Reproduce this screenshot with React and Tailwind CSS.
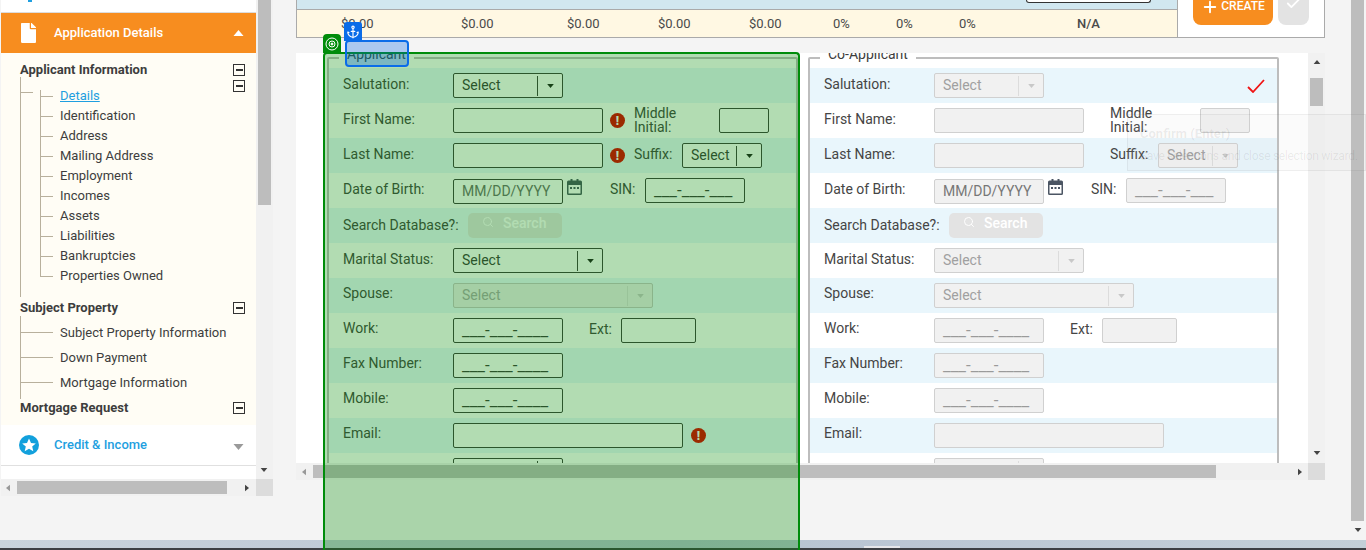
import { Anchor, Check, Plus, Search } from "lucide-react";
import { FaFile } from "react-icons/fa";

const LINE = "bg-[#b8b09c]";

function Caret({ dir = "down", className = "" }) {
  const points = {
    down: "0,0 10,0 5,6",
    up: "0,6 10,6 5,0",
    left: "6,0 6,10 0,5",
    right: "0,0 6,5 0,10",
  }[dir];
  const box = dir === "down" || dir === "up" ? "0 0 10 6" : "0 0 6 10";
  return (
    <svg viewBox={box} className={className} fill="currentColor">
      <polygon points={points} />
    </svg>
  );
}

function Minus() {
  return (
    <span className="flex h-3 w-3 items-center justify-center border border-[#333] bg-[#fffdf5]">
      <span className="h-0.5 w-[7px] bg-[#333]" />
    </span>
  );
}

function TreeItem({ label, active }) {
  return (
    <li className="flex h-5 items-center">
      <span className={`h-px w-[13px] ${LINE}`} />
      <span className={`ml-[7px] ${active ? "text-[#1f9fe0] underline" : ""}`}>{label}</span>
    </li>
  );
}

function Sidebar() {
  const details = ["Identification", "Address", "Mailing Address", "Employment", "Incomes", "Assets", "Liabilities", "Bankruptcies", "Properties Owned"];
  return (
    <div className="ml-px flex w-[272px] shrink-0 flex-col">
      <div className="flex h-[479px]">
        <div className="flex w-[255px] flex-col bg-white">
          <div className="h-[13px] shrink-0 border-b border-[#dcdcdc]">
            <div className="ml-[27px] h-[2px] w-1 bg-[#1f9fe0]" />
          </div>
          <div className="flex h-[40px] shrink-0 items-center bg-[#f78d1f] text-white">
            <FaFile className="ml-[19px] h-[20px] w-[17px]" />
            <span className="ml-[17px] text-[13px] font-medium">Application Details</span>
            <Caret dir="up" className="ml-auto mr-[12px] h-[6px] w-[11px]" />
          </div>
          <div className="h-[372px] shrink-0 bg-[#fffdf5] pt-[7px] text-[13px] text-[#3d3d3d]">
            <div className="flex h-5 items-center justify-between pl-[19px] pr-[11px]">
              <span className="font-bold">Applicant Information</span>
              <Minus />
            </div>
            <div className={`relative ml-[19px] -mt-[3px] h-[220px] w-px ${LINE}`}>
              <span className={`absolute left-0 top-[15px] h-px w-[13px] ${LINE}`} />
              <span className="absolute left-[213px] top-[3px]"><Minus /></span>
              <ul className={`absolute left-[20px] top-[13px] h-[186px] w-px ${LINE}`}>
                <div className="-mt-[4px] w-[200px]">
                  <TreeItem label="Details" active />
                  {details.map((d) => <TreeItem key={d} label={d} />)}
                </div>
              </ul>
            </div>
            <div className="mt-px flex h-5 items-center justify-between pl-[19px] pr-[11px]">
              <span className="font-bold">Subject Property</span>
              <Minus />
            </div>
            <div className={`ml-[19px] -mt-[2px] h-[83px] w-px pt-[4px] ${LINE}`}>
              <ul className="w-[220px]">
                {["Subject Property Information", "Down Payment", "Mortgage Information"].map((d) => (
                  <li key={d} className="flex h-[25px] items-center">
                    <span className={`h-px w-[33px] ${LINE}`} />
                    <span className="ml-[7px]">{d}</span>
                  </li>
                ))}
              </ul>
            </div>
            <div className="-mt-px flex h-5 items-center justify-between pl-[19px] pr-[11px]">
              <span className="font-bold">Mortgage Request</span>
              <Minus />
            </div>
          </div>
          <div className="flex h-[41px] shrink-0 items-center border-b border-[#e0e0e0] text-[#1f9fe0]">
            <svg viewBox="0 0 20 20" className="ml-[18px] h-5 w-5">
              <circle cx="10" cy="10" r="10" fill="#12a0dc" />
              <polygon fill="#fff" points="10,3.5 12,8 16.8,8.4 13.2,11.5 14.3,16.2 10,13.7 5.7,16.2 6.8,11.5 3.2,8.4 8,8" />
            </svg>
            <span className="ml-[15px] text-[13px] font-medium">Credit &amp; Income</span>
            <Caret className="ml-auto mr-[12px] mt-[3px] h-[6px] w-[11px] text-[#9a9a9a]" />
          </div>
        </div>
        <div className="flex w-[17px] flex-col bg-[#f1f1f1] pl-[2px]">
          <div className="h-[205px] w-[13px] bg-[#bdbdbd]" />
          <Caret className="ml-[2px] mt-[263px] h-[4px] w-[8px] text-[#444]" />
        </div>
      </div>
      <div className="flex h-[17px]">
        <div className="flex flex-1 items-center bg-[#f1f1f1] pl-[5px] pr-[7px]">
          <Caret dir="left" className="h-2 w-[4px] text-[#999]" />
          <div className="ml-[7px] h-[13px] w-[210px] bg-[#bdbdbd]" />
          <Caret dir="right" className="ml-auto h-2 w-[4px] text-[#444]" />
        </div>
        <div className="w-[17px] bg-[#dcdcdc]" />
      </div>
    </div>
  );
}

function SummaryBar() {
  const cells = [["$0.00", 120], ["$0.00", 106], ["$0.00", 91], ["$0.00", 91], ["$0.00", 84], ["0%", 63], ["0%", 63], ["0%", 118], ["N/A", 56]];
  return (
    <div className="flex h-[38px] border-b border-r border-[#aaa] bg-white">
      <div className="flex w-[882px] flex-col border-l border-r border-[#aaa]">
        <div className="flex h-[10px] justify-end border-b border-[#aaa] bg-[#d1e7f0] pr-[26px]">
          <div className="h-[3px] w-[125px] rounded-b-sm border border-t-0 border-[#333] bg-white" />
        </div>
        <div className="flex flex-1 items-center bg-[#fff8e3] pl-[44px] text-[13px] text-[#4a4a4a]">
          {cells.map(([t, w], i) => (
            <span key={i} className={`shrink-0 ${t === "N/A" ? "font-medium" : ""}`} style={{ width: w }}>{t}</span>
          ))}
        </div>
      </div>
      <div className="ml-[15px] flex h-[25px] w-[80px] items-start justify-center overflow-hidden rounded-b-lg bg-[#f78d1f] text-white">
        <Plus className="-mt-[2px] h-[18px] w-[18px]" strokeWidth={2.5} />
        <span className="-mt-px ml-[2px] text-[12px] font-medium leading-[14px]">CREATE</span>
      </div>
      <div className="ml-[5px] flex h-[25px] w-[31px] items-start justify-center overflow-hidden rounded-b-lg bg-[#e3e3e3] text-white">
        <Check className="-mt-[5px] h-[17px] w-[17px]" strokeWidth={2.5} />
      </div>
    </div>
  );
}

function Alert({ className = "" }) {
  return (
    <span className={`flex h-[15px] w-[15px] shrink-0 items-center justify-center rounded-full bg-[#df0000] text-[12px] font-black leading-none text-white ${className}`}>!</span>
  );
}

function CalendarIcon({ className = "" }) {
  return (
    <svg viewBox="0 0 15 16" className={className} fill="#4b5563">
      <path d="M1.5 1.5h2V0h2v1.5h4V0h2v1.5h2A1.5 1.5 0 0 1 15 3v11.5a1.5 1.5 0 0 1-1.5 1.5h-12A1.5 1.5 0 0 1 0 14.5V3a1.5 1.5 0 0 1 1.5-1.5zM1.5 6v8.5h12V6z" />
      <rect x="3" y="8" width="2" height="2" />
      <rect x="6.5" y="8" width="2" height="2" />
      <rect x="10" y="8" width="2" height="2" />
    </svg>
  );
}

function Box({ w, disabled, mt, children, className = "" }) {
  const tone = disabled ? "border-[#d0d0d0] bg-[#f1f1f1] text-[#a0a0a0]" : "border-[#3f3f3f] bg-white text-[#3d3d3d]";
  return (
    <div className={`flex h-[25px] shrink-0 items-center rounded-[2px] border ${tone} ${mt ? "mt-px" : ""} ${className}`} style={{ width: w }}>
      {children}
    </div>
  );
}

function SelectBox({ w, disabled, faded }) {
  const off = disabled || faded;
  return (
    <Box w={w} disabled={disabled} className={faded ? "border-[#c6c6c6] bg-[#ececec]! text-[#a8a8a8]!" : ""}>
      <span className="ml-[8px] text-[14px]">Select</span>
      <span className={`ml-auto h-[20px] w-px ${off ? "bg-[#dcdcdc]" : "bg-[#3f3f3f]"}`} />
      <span className="flex w-[24px] items-center justify-center">
        <Caret className={`h-[4px] w-[7px] ${off ? "text-[#c8c8c8]" : "text-[#222]"}`} />
      </span>
    </Box>
  );
}

function Mask({ w, disabled, text }) {
  return (
    <Box w={w} disabled={disabled}>
      <span className={`ml-[8px] whitespace-nowrap text-[17px] leading-none ${disabled ? "text-[#9a9a9a]" : "text-[#3d3d3d]"}`}>{text}</span>
    </Box>
  );
}

function Label({ children, className = "w-[110px] -mt-[3px]" }) {
  return <span className={`shrink-0 text-[14px] leading-[14px] text-[#454545] ${className}`}>{children}</span>;
}

function Row({ alt, children }) {
  return <div className={`flex h-[35px] items-center pl-[14px] ${alt ? "bg-[#e9f6fc]" : "bg-white"}`}>{children}</div>;
}

const PHONE = "___-___-____";
const LOWER = "w-[110px] -mt-[5px]";

function ApplicantForm({ title, co }) {
  return (
    <div className="relative mt-[4px] h-[500px] w-[471px] shrink-0 rounded-t-[2px] border-2 border-[#bdbdbd] pt-[9px]">
      <span className="absolute -top-[15px] left-[10px] bg-white px-[8px] text-[14px] leading-5 text-[#3d3d3d]">{title}</span>
      <Row alt>
        <Label>Salutation:</Label>
        <SelectBox w={110} disabled={co} />
        {co && (
          <svg viewBox="0 0 18 14" className="ml-auto mr-[12px] h-[14px] w-[18px]" fill="none" stroke="#f01414" strokeWidth="1.8">
            <polyline points="1,8 6,13 17,1" />
          </svg>
        )}
      </Row>
      <Row>
        <Label>First Name:</Label>
        <Box w={150} disabled={co} />
        {co ? null : <Alert className="ml-[7px]" />}
        <span className={`-mt-px shrink-0 text-[14px] leading-[14px] text-[#454545] ${co ? "ml-[26px] w-[90px]" : "ml-[9px] w-[85px]"}`}>Middle<br />Initial:</span>
        <Box w={50} disabled={co} />
      </Row>
      <Row alt>
        <Label>Last Name:</Label>
        <Box w={150} disabled={co} />
        {co ? null : <Alert className="ml-[7px]" />}
        <Label className={co ? "-mt-[3px] ml-[26px] w-[48px]" : "-mt-[3px] ml-[9px] w-[48px]"}>Suffix:</Label>
        <SelectBox w={80} disabled={co} />
      </Row>
      <Row>
        <Label>Date of Birth:</Label>
        <Box w={110} disabled mt className={co ? "" : "border-[#3f3f3f]! bg-white!"}>
          <span className={`ml-[8px] text-[14px] ${co ? "text-[#777]" : "text-[#6f6f6f]"}`}>MM/DD/YYYY</span>
        </Box>
        <CalendarIcon className="-mt-[7px] ml-[4px] h-[16px] w-[15px]" />
        <Label className="-mt-[3px] ml-[28px] w-[35px]">SIN:</Label>
        <Mask w={100} disabled={co} text="___-___-___" />
      </Row>
      <Row alt>
        <Label className="-mt-px w-[125px]">Search Database?:</Label>
        <div className="flex h-[25px] w-[94px] items-start rounded-[5px] bg-[#e3e3e3] text-[14px] font-medium leading-5 text-white">
          <Search className="ml-[14px] mt-[3px] h-[12px] w-[12px]" />
          <span className="ml-[9px]">Search</span>
        </div>
      </Row>
      <Row>
        <Label>Marital Status:</Label>
        <SelectBox w={150} disabled={co} />
      </Row>
      <Row alt>
        <Label className={LOWER}>Spouse:</Label>
        <SelectBox w={200} disabled={co} faded={!co} />
      </Row>
      <Row>
        <Label className={LOWER}>Work:</Label>
        <Mask w={110} disabled={co} text={PHONE} />
        <Label className="-mt-[3px] ml-[26px] w-[32px]">Ext:</Label>
        <Box w={75} disabled={co} />
      </Row>
      <Row alt>
        <Label className={LOWER}>Fax Number:</Label>
        <Mask w={110} disabled={co} text={PHONE} />
      </Row>
      <Row>
        <Label className={LOWER}>Mobile:</Label>
        <Mask w={110} disabled={co} text={PHONE} />
      </Row>
      <Row alt>
        <Label className={LOWER}>Email:</Label>
        <Box w={230} disabled={co} />
        {co ? null : <Alert className="ml-[8px]" />}
      </Row>
      <Row>
        <Label className="-mt-[2px] w-[110px]">Province:</Label>
        <SelectBox w={110} disabled={co} />
      </Row>
    </div>
  );
}

function FormPanel() {
  return (
    <div className="mt-[15px] flex flex-col">
      <div className="flex h-[410px]">
        <div className="flex h-full w-[1012px] gap-[10px] overflow-hidden bg-white pl-[31px]">
          <ApplicantForm title="Applicant" />
          <ApplicantForm title="Co-Applicant" co />
        </div>
        <div className="flex w-[17px] flex-col items-center bg-[#f1f1f1] pt-[7px]">
          <Caret dir="up" className="h-[4px] w-[8px] text-[#444]" />
          <div className="mt-[14px] h-[28px] w-[13px] bg-[#bdbdbd]" />
          <Caret className="mt-[345px] h-[4px] w-[8px] text-[#444]" />
        </div>
      </div>
      <div className="flex h-[17px]">
        <div className="flex flex-1 items-center bg-[#f1f1f1] pl-[6px] pr-[6px]">
          <Caret dir="left" className="h-2 w-[4px] text-[#999]" />
          <div className="ml-[7px] h-[13px] w-[903px] bg-[#bdbdbd]" />
          <Caret dir="right" className="ml-auto h-2 w-[4px] text-[#444]" />
        </div>
        <div className="w-[17px] bg-[#dcdcdc]" />
      </div>
    </div>
  );
}

// selection wizard highlight that floats over the form
function SelectionOverlay() {
  return (
    <>
      <div className="absolute left-[470px] top-[52px] h-px w-[92px] bg-[#2c7a3a]" />
      <div className="absolute left-[323px] top-[52px] h-[498px] w-[477px] rounded-t-[4px] border-2 border-b-0 border-[#008c0a] bg-[rgba(0,140,0,0.3)]" />
      <div className="absolute left-[323px] top-[34px] flex h-[19px] w-[18px] items-center justify-center rounded-t-[4px] bg-[#008c0a] text-white">
        <svg viewBox="0 0 14 14" className="h-[14px] w-[14px]" fill="none" stroke="currentColor">
          <circle cx="7" cy="7" r="6" />
          <circle cx="7" cy="7" r="3" />
          <circle cx="7" cy="7" r="1" fill="currentColor" />
        </svg>
      </div>
      <div className="absolute left-[345px] top-[40px] h-[27px] w-[64px] rounded-[4px] border-2 border-[#0a6ce8] bg-[rgba(0,100,230,0.3)]" />
      <div className="absolute left-[344px] top-[22px] flex h-[19px] w-[18px] items-center justify-center rounded-t-[3px] bg-[#0a6ce8] text-white">
        <Anchor className="h-[14px] w-[14px]" strokeWidth={2} />
      </div>
      <div className="absolute left-[1127px] top-[114px] h-[57px] w-[239px] border border-[rgba(0,0,0,0.05)] bg-[rgba(200,200,200,0.08)] pl-[12px] pt-[9px] text-[rgba(0,0,0,0.08)]">
        <div className="text-[13px] font-bold">Confirm (Enter)</div>
        <div className="mt-[3px] whitespace-nowrap text-[12px] tracking-[-0.3px]">Save selections and close selection wizard.</div>
      </div>
    </>
  );
}

export default function App() {
  return (
    <div className="relative flex h-[550px] w-[1366px] flex-col overflow-hidden bg-[#f4f4f4] font-['Roboto',sans-serif]">
      <div className="flex h-[540px]">
        <Sidebar />
        <div className="ml-[23px] flex w-[1029px] flex-col">
          <SummaryBar />
          <FormPanel />
        </div>
        <div className="ml-auto flex w-[17px] flex-col items-center">
          <div className="h-[521px] w-[13px] bg-[#bdbdbd]" />
          <Caret className="mt-[7px] h-[4px] w-[8px] text-[#444]" />
        </div>
      </div>
      <div className="relative h-[8px] bg-gradient-to-r from-[#c9d3dc] via-[#b7c2d2] to-[#c3cfd8]">
        <div className="absolute bottom-0 left-[864px] h-[2px] w-[36px] bg-[#e6e6ea]" />
      </div>
      <div className="h-[2px] bg-[#3d3f44]" />
      <SelectionOverlay />
    </div>
  );
}
